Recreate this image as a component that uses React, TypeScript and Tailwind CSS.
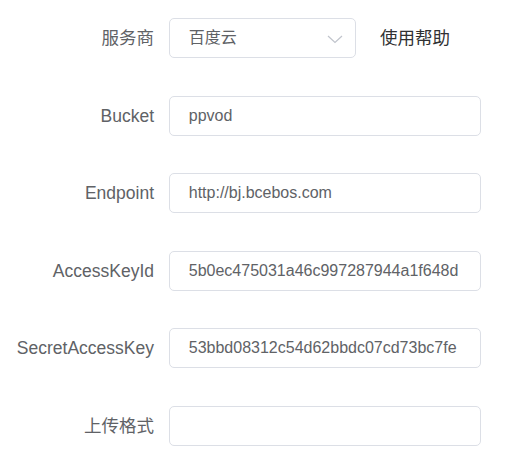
import React from "react";

const font = { fontFamily: '"Liberation Sans", "Noto Sans CJK SC", Arial, sans-serif' };

function Label({ children }: { children: React.ReactNode }) {
  return (
    <div className="w-[169px] shrink-0 pr-[15px] text-right text-[17.5px] leading-[40px] text-[#606266]">
      {children}
    </div>
  );
}

function Field({ value }: { value: string }) {
  return (
    <input
      readOnly
      value={value}
      style={font}
      className="box-border h-10 w-[312px] rounded-[5px] border border-[#dcdfe6] bg-white px-[18.75px] text-[16px] text-[#606266] outline-none"
    />
  );
}

export default function App() {
  const rows: [string, string][] = [
    ["Bucket", "ppvod"],
    ["Endpoint", "http://bj.bcebos.com"],
    ["AccessKeyId", "5b0ec475031a46c997287944a1f648d"],
    ["SecretAccessKey", "53bbd08312c54d62bbdc07cd73bc7fe"],
    ["上传格式", ""],
  ];
  return (
    <div style={font} className="h-[464px] w-[508px] bg-white pt-[18px]">
      <div className="flex flex-col gap-[37.6px]">
        <div className="flex items-center">
          <Label>服务商</Label>
          <div className="relative box-border flex h-10 w-[187px] items-center rounded-[5px] border border-[#dcdfe6] bg-white pl-[18.75px] text-[16px] text-[#606266]">
            <span>百度云</span>
            <svg
              className="absolute right-[12px] top-[12.5px]"
              width="16"
              height="14"
              viewBox="0 0 16 14"
              fill="none"
            >
              <path d="M1 4 L8 10.5 L15 4" stroke="#c0c4cc" strokeWidth="1.2" />
            </svg>
          </div>
          <span className="ml-[24px] text-[17.5px] leading-[40px] text-[#303133]">使用帮助</span>
        </div>
        {rows.map(([l, v]) => (
          <div key={l} className="flex items-center">
            <Label>{l}</Label>
            <Field value={v} />
          </div>
        ))}
      </div>
    </div>
  );
}
